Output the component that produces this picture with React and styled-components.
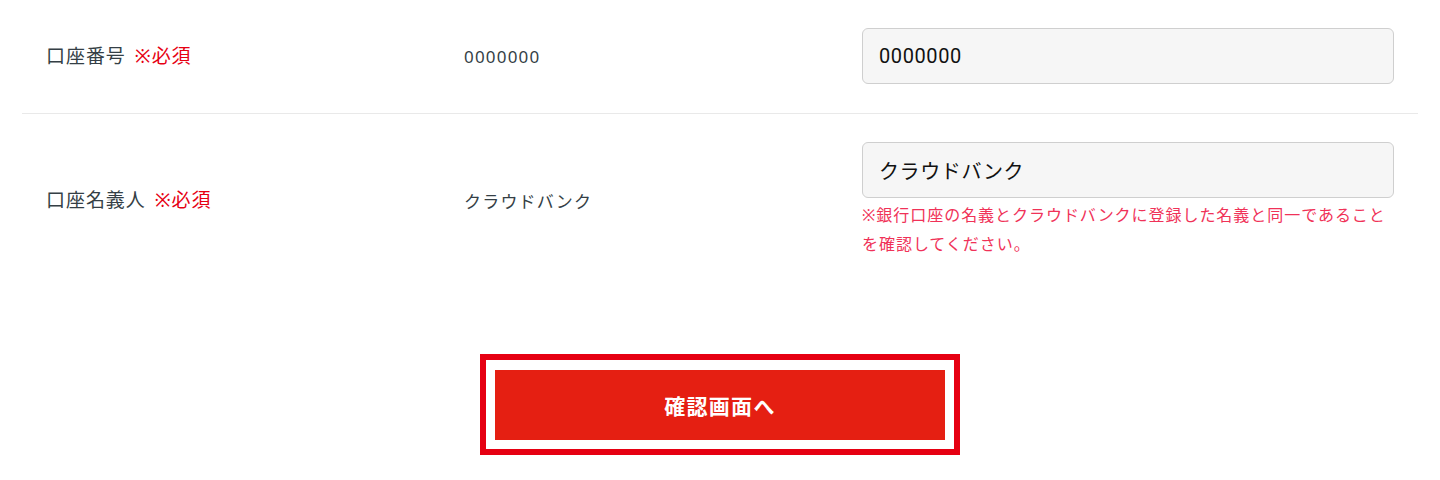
import React from 'react';
import styled, { createGlobalStyle } from 'styled-components';

const GlobalStyle = createGlobalStyle`
  body {
    margin: 0;
    background: #ffffff;
    font-family: "Noto Sans", "Noto Sans CJK JP", sans-serif;
  }
`

const Page = styled.div`
  width: 1440px;
  padding: 0 22px;
  box-sizing: border-box;
`

const Row = styled.div`
  display: grid;
  grid-template-columns: 418px 398px 1fr;
  align-items: center;
  padding: 28px 24px 29px;
  border-bottom: ${props => props.last ? 'none' : '1px solid #e9e9e9'};
`

const Label = styled.div`
  font-size: 19px;
  line-height: 24px;
  color: #353f46;
  letter-spacing: 0.05em;
  margin-top: -1px;
`

const Required = styled.span`
  color: #e60012;
  margin-left: 9px;
`

const Value = styled.div`
  font-size: 17px;
  color: #353f46;
  letter-spacing: 0.07em;
`

const Field = styled.div`
  display: flex;
  flex-direction: column;
`

const Input = styled.input`
  box-sizing: border-box;
  width: 100%;
  height: 56px;
  padding: 0 16px;
  background: #f6f6f6;
  border: 1px solid #cfcfcf;
  border-radius: 6px;
  font-family: "Roboto", "Noto Sans CJK JP", sans-serif;
  font-size: 20px;
  letter-spacing: 0.03em;
  color: #111111;
  outline: none;
`

const Note = styled.p`
  margin: 3px 0 0;
  font-size: 16px;
  line-height: 29px;
  letter-spacing: 0.06em;
  color: #f03258;
`

const Actions = styled.div`
  display: flex;
  justify-content: center;
  padding-top: 66px;
`

const Frame = styled.div`
  border: 6px solid #e60012;
  padding: 10px 9px 9px;
`

const Submit = styled.button`
  display: block;
  width: 450px;
  height: 70px;
  border: none;
  background: #e51f12;
  color: #ffffff;
  font-family: "Noto Sans", "Noto Sans CJK JP", sans-serif;
  font-weight: 700;
  font-size: 21px;
  letter-spacing: 0.06em;
  cursor: pointer;
`

const App = () => {
  return <>
    <GlobalStyle />
    <Page>
      <Row>
        <Label>口座番号<Required>※必須</Required></Label>
        <Value>0000000</Value>
        <Field>
          <Input defaultValue="0000000" />
        </Field>
      </Row>
      <Row last>
        <Label>口座名義人<Required>※必須</Required></Label>
        <Value>クラウドバンク</Value>
        <Field>
          <Input defaultValue="クラウドバンク" />
          <Note>※銀行口座の名義とクラウドバンクに登録した名義と同一であることを確認してください。</Note>
        </Field>
      </Row>
      <Actions>
        <Frame>
          <Submit>確認画面へ</Submit>
        </Frame>
      </Actions>
    </Page>
  </>
}

export default App;
